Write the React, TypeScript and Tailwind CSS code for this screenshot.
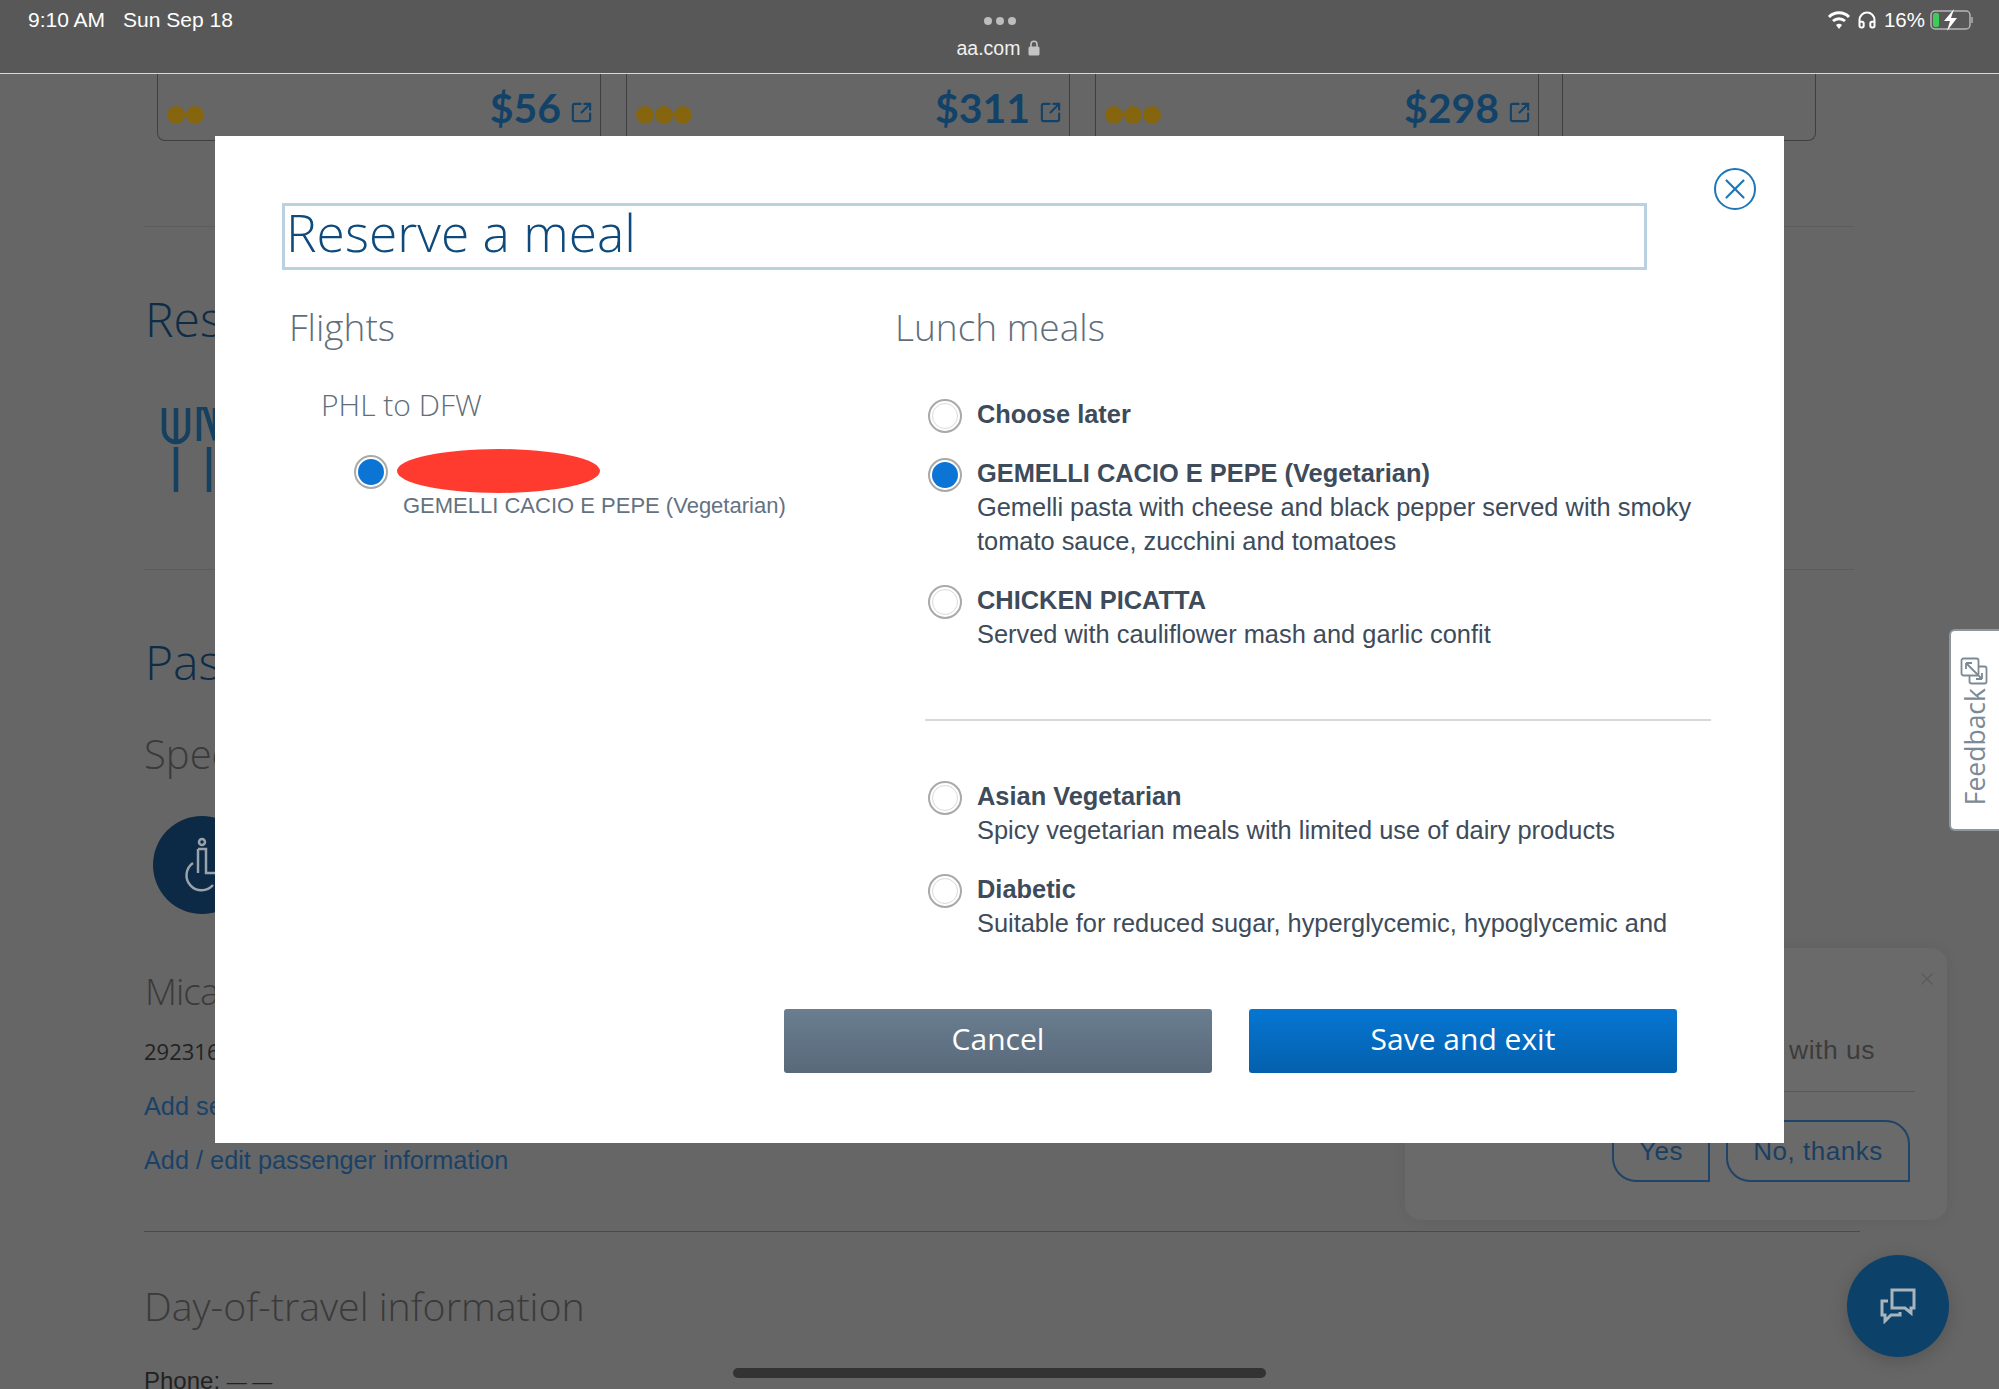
import { Headphones, SquareArrowOutUpRight, X } from "lucide-react";

const sans = "font-['Liberation_Sans',Arial,sans-serif]";
const open = "font-['Open_Sans',sans-serif]";

const fares = [
  { dots: 2, price: "$56" },
  { dots: 3, price: "$311" },
  { dots: 3, price: "$298" },
];

const meals = [
  { name: "Choose later", lines: [] as string[], mb: "mb-[23px]" },
  {
    name: "GEMELLI CACIO E PEPE (Vegetarian)",
    lines: ["Gemelli pasta with cheese and black pepper served with smoky", "tomato sauce, zucchini and tomatoes"],
    selected: true,
    mb: "mb-[25px]",
  },
  { name: "CHICKEN PICATTA", lines: ["Served with cauliflower mash and garlic confit"], mb: "" },
];

const specialMeals = [
  { name: "Asian Vegetarian", lines: ["Spicy vegetarian meals with limited use of dairy products"], mb: "mb-[25px]" },
  { name: "Diabetic", lines: ["Suitable for reduced sugar, hyperglycemic, hypoglycemic and"], mb: "mb-[25px]" },
];

function Radio({ selected }: { selected?: boolean }) {
  return (
    <span className="flex h-[34px] w-[34px] shrink-0 items-center justify-center rounded-full border-2 border-[#a9a9a9] bg-white">
      <span
        className={
          selected
            ? "h-[26px] w-[26px] rounded-full bg-[#0b74d5]"
            : "h-[26px] w-[26px] rounded-full border border-[#d8dbde] bg-white"
        }
      />
    </span>
  );
}

function Meal({ name, lines, selected, mb }: { name: string; lines: string[]; selected?: boolean; mb: string }) {
  return (
    <div className={`flex gap-[15px] ${mb}`}>
      <div className="pt-[2px]">
        <Radio selected={selected} />
      </div>
      <div className={`${sans} text-[25.4px] leading-[34px] text-[#3d4b5a]`}>
        <div className="font-bold">{name}</div>
        {lines.map((l) => (
          <div key={l} className="whitespace-nowrap">
            {l}
          </div>
        ))}
      </div>
    </div>
  );
}

function FareCard({ dots, price }: { dots: number; price: string }) {
  return (
    <div className="flex h-[67px] w-[443px] items-center justify-between border-r border-[#3f3f3f] pl-[9px] pr-[7px]">
      <div className="mt-[14px] flex gap-[1px]">
        {Array.from({ length: dots }).map((_, i) => (
          <span key={i} className="h-[18px] w-[18px] rounded-full bg-[#86650f]" />
        ))}
      </div>
      <div className="flex items-center gap-[9px]">
        <span className="font-['Lato',sans-serif] text-[41px] font-bold leading-[56px] text-[#124268]">{price}</span>
        <SquareArrowOutUpRight className="mt-[10px] h-[23px] w-[23px] text-[#124268]" strokeWidth={2.2} />
      </div>
    </div>
  );
}

function StatusBar() {
  return (
    <div className={`${sans} flex h-[74px] items-start justify-between border-b border-[#d8d8d8] bg-[#585858] text-white`}>
      <div className="flex gap-[18px] pl-[28px] pt-[8px] text-[21px] leading-[24px]">
        <span>9:10 AM</span>
        <span>Sun Sep 18</span>
      </div>
      <div className="absolute left-0 right-0 top-0 flex flex-col items-center pt-[17px]">
        <div className="flex gap-[4px]">
          <span className="h-[8px] w-[8px] rounded-full bg-[#bdbdbd]" />
          <span className="h-[8px] w-[8px] rounded-full bg-[#bdbdbd]" />
          <span className="h-[8px] w-[8px] rounded-full bg-[#bdbdbd]" />
        </div>
        <div className="mt-[9px] flex items-center gap-[8px] pr-[2px] text-[19.5px] leading-[28px] text-[#f0f0f0]">
          <span>aa.com</span>
          <svg width="12" height="16" viewBox="0 0 12 16" className="text-[#c4c4c4]">
            <rect x="0.5" y="6.5" width="11" height="9" rx="1.5" fill="currentColor" />
            <path d="M3 7V4.2a3 3 0 0 1 6 0V7" fill="none" stroke="currentColor" strokeWidth="1.6" />
          </svg>
        </div>
      </div>
      <div className="flex items-center gap-[5px] pr-[25px] pt-[8px] text-[20.5px] leading-[24px]">
        <svg width="24" height="20" viewBox="0 0 24 20" className="mr-[1px]">
          <path d="M2 7a14 14 0 0 1 20 0" fill="none" stroke="white" strokeWidth="3" />
          <path d="M6 11a9 9 0 0 1 12 0" fill="none" stroke="white" strokeWidth="3" />
          <path d="M9 15a4.5 4.5 0 0 1 6 0l-3 4z" fill="white" />
        </svg>
        <Headphones className="h-[20px] w-[20px]" strokeWidth={2.4} />
        <span className="ml-[2px]">16%</span>
        <svg width="44" height="22" viewBox="0 0 44 22">
          <rect x="1" y="2" width="39" height="18" rx="4" fill="none" stroke="#b5b5b5" strokeWidth="1.5" />
          <rect x="3" y="4" width="6" height="14" rx="2" fill="#3ecb5a" />
          <path d="M42 8v6" stroke="#9a9a9a" strokeWidth="2" />
          <path d="M24 0 14 12h6l-3 10 10-13h-6z" fill="white" />
        </svg>
      </div>
    </div>
  );
}

function Background() {
  return (
    <div className="flex flex-col">
      <div className="ml-[157px] flex h-[67px] w-[1659px] rounded-b-[8px] border-x border-b border-[#3f3f3f]">
        {fares.map((f, i) => (
          <div key={f.price} className={i === 0 ? "flex" : "ml-[25px] flex border-l border-[#3f3f3f]"}>
            <FareCard {...f} />
          </div>
        ))}
        <div className="ml-[23px] border-l border-[#3f3f3f]" />
      </div>

      <div className="ml-[144px] mt-[85px] h-px w-[1710px] bg-[#5c5c5c]" />
      <div className={`${open} ml-[145px] mt-[59px] text-[48px] font-light leading-[66px] text-[#0d2c47]`}>Reserve</div>
      <svg width="56" height="86" viewBox="0 0 56 86" className="ml-[161px] mt-[55px]" fill="none" stroke="#15405f" strokeWidth="4.5">
        <path d="M3 1v22a12 12 0 0 0 24 0V1M15 1v32M15 40v45" />
        <path d="M38 34V1h6l10 32V1M48 40v45" />
      </svg>
      <div className="ml-[144px] mt-[76px] h-px w-[1710px] bg-[#5c5c5c]" />
      <div className={`${open} ml-[145px] mt-[59px] text-[48px] font-light leading-[66px] text-[#0d2c47]`}>Passenger</div>
      <div className={`${open} ml-[144px] mt-[32px] text-[40px] font-light leading-[54px] text-[#3a3a3a]`}>Special</div>

      <div className="ml-[153px] mt-[35px] flex h-[98px] w-[98px] items-center justify-center rounded-full bg-[#0c2a45]">
        <svg width="50" height="56" viewBox="0 0 50 56" fill="none" stroke="#9aa3ab" strokeWidth="2.5">
          <circle cx="25" cy="5" r="3" />
          <path d="M21 12h8v24h14" />
          <path d="M21 12v24" />
          <path d="M16 26a15 15 0 1 0 20 22" />
        </svg>
      </div>

      <div className={`${open} ml-[145px] mt-[51px] text-[37px] font-light leading-[52px] tracking-[-1px] text-[#3a3a3a]`}>Micah</div>
      <div className={`${open} ml-[144px] mt-[17px] text-[22px] leading-[34px] text-[#222]`}>292316</div>
      <div className={`${sans} ml-[144px] mt-[21px] text-[25.3px] leading-[34px] text-[#1a4268]`}>Add seats</div>
      <div className={`${sans} ml-[144px] mt-[20px] text-[25.3px] leading-[34px] text-[#1a4268]`}>Add / edit passenger information</div>
      <div className="ml-[144px] mt-[54px] h-px w-[1716px] bg-[#4a4a4a]" />
      <div className={`${open} ml-[144px] mt-[47px] text-[39.3px] font-light leading-[54px] text-[#3a3a3a]`}>Day-of-travel information</div>
      <div className={`${sans} ml-[144px] mt-[31px] text-[24px] leading-[34px] text-[#222]`}>
        Phone: <span className="text-[20px]">— —</span>
      </div>
    </div>
  );
}

function SurveyCard() {
  return (
    <div className={`${sans} absolute left-[1405px] top-[948px] h-[272px] w-[542px] rounded-[16px] bg-[#6a6a6a] shadow-[0_0_14px_rgba(0,0,0,0.06)]`}>
      <X className="absolute right-[10px] top-[21px] h-[20px] w-[20px] text-[#5a5a5a]" strokeWidth={1.5} />
      <div className="absolute right-[72px] top-[87px] text-[26.5px] leading-[30px] tracking-[0.5px] text-[#3c3c3c]">with us</div>
      <div className="absolute left-[300px] top-[143px] h-px w-[210px] bg-[#585858]" />
      <div className="absolute bottom-[38px] right-[37px] flex gap-[16px] text-[26px] tracking-[0.5px] text-[#1a3f63]">
        <button className="flex h-[62px] w-[98px] items-center justify-center rounded-bl-[24px] rounded-tr-[24px] border-2 border-[#1f4468]">Yes</button>
        <button className="flex h-[62px] w-[184px] items-center justify-center rounded-bl-[24px] rounded-tr-[24px] border-2 border-[#1f4468]">No, thanks</button>
      </div>
    </div>
  );
}

function Modal() {
  return (
    <div className="absolute left-[215px] top-[136px] flex h-[1007px] w-[1569px] flex-col bg-white pl-[67px] pr-[137px] pt-[67px]">
      <button className="absolute left-[1499px] top-[32px] flex h-[42px] w-[42px] items-center justify-center rounded-full border-2 border-[#1d76b8] text-[#1d76b8]">
        <X className="h-[34px] w-[34px]" strokeWidth={1.5} />
      </button>

      <div className={`${open} h-[67px] border-[3px] border-[#b9d1e1] pl-[1px] text-[51.5px] font-light leading-[52px] text-[#0e4a7c]`}>
        Reserve a meal
      </div>

      <div className="flex">
        <div className="w-[613px] shrink-0 pl-[7px] pt-[28px]">
          <div className={`${open} text-[37px] font-light leading-[58px] text-[#5f6e7c]`}>Flights</div>
          <div className={`${open} ml-[32px] mt-[29px] text-[30px] font-light leading-[40px] text-[#5f6e7c]`}>PHL to DFW</div>
          <div className="ml-[65px] mt-[24px] flex gap-[9px]">
            <div className="pt-[6px]">
              <Radio selected />
            </div>
            <div>
              <div className="h-[44px] w-[203px] rounded-[50%] bg-[#ff3b30]" />
              <div className={`${sans} -mt-[1px] ml-[6px] whitespace-nowrap text-[22px] leading-[28px] text-[#64727f]`}>GEMELLI CACIO E PEPE (Vegetarian)</div>
            </div>
          </div>
        </div>

        <div className="pt-[28px]">
          <div className={`${open} text-[37px] font-light leading-[58px] text-[#5f6e7c]`}>Lunch meals</div>
          <div className="mt-[41px] h-[548px] w-[860px] overflow-hidden pl-[33px]">
            {meals.map((m) => (
              <Meal key={m.name} {...m} />
            ))}
            <div className="-ml-[3px] mb-[58px] mt-[68px] h-[2px] w-[786px] bg-[#d5d9dc]" />
            {specialMeals.map((m) => (
              <Meal key={m.name} {...m} />
            ))}
          </div>
        </div>
      </div>

      <div className={`${open} absolute left-[569px] top-[873px] flex gap-[37px] text-[30px] text-white`}>
        <button className="flex h-[64px] w-[428px] items-center justify-center rounded-[3px] bg-gradient-to-b from-[#6a7e8f] to-[#58697a] pb-[6px]">Cancel</button>
        <button className="flex h-[64px] w-[428px] items-center justify-center rounded-[3px] bg-gradient-to-b from-[#0676d3] to-[#0460ac] pb-[6px]">Save and exit</button>
      </div>
    </div>
  );
}

function FeedbackTab() {
  return (
    <div className="absolute left-[1949px] top-[629px] flex h-[202px] w-[50px] flex-col items-center rounded-l-[6px] border-2 border-r-0 border-[#8d979f] bg-white pt-[26px]">
      <svg width="28" height="28" viewBox="0 0 28 28" fill="none" stroke="#7c8a96" strokeWidth="1.8" className="-ml-[2px]">
        <rect x="1.5" y="1.5" width="17" height="17" rx="2" />
        <path d="M18.5 9.5h6a2 2 0 0 1 2 2v13a2 2 0 0 1-2 2h-13a2 2 0 0 1-2-2v-6" />
        <path d="M6 6l16 16M6 6h6M6 6v6M22 22h-6M22 22v-6" />
      </svg>
      <span className={`${open} mt-[3px] rotate-180 text-[26.5px] leading-[30px] text-[#7c8a96] [writing-mode:vertical-rl]`}>Feedback</span>
    </div>
  );
}

export default function App() {
  return (
    <div className="relative h-[1389px] w-[1999px] overflow-hidden bg-[#666666]">
      <StatusBar />
      <Background />
      <SurveyCard />
      <Modal />
      <FeedbackTab />

      <div className="absolute left-[1847px] top-[1255px] flex h-[102px] w-[102px] items-center justify-center rounded-full bg-[#0c4169] shadow-[0_4px_18px_rgba(0,0,0,0.18)]">
        <svg width="36" height="36" viewBox="0 0 36 36" fill="none" stroke="#a9b4bd" strokeWidth="3">
          <path d="M12 2h22v18h-3v5l-6-5H12z" />
          <path d="M8 13H2v14h3v6l6-6h9v-3" />
        </svg>
      </div>

      <div className="absolute left-[733px] top-[1368px] h-[10px] w-[533px] rounded-full bg-[#333333]" />
    </div>
  );
}
